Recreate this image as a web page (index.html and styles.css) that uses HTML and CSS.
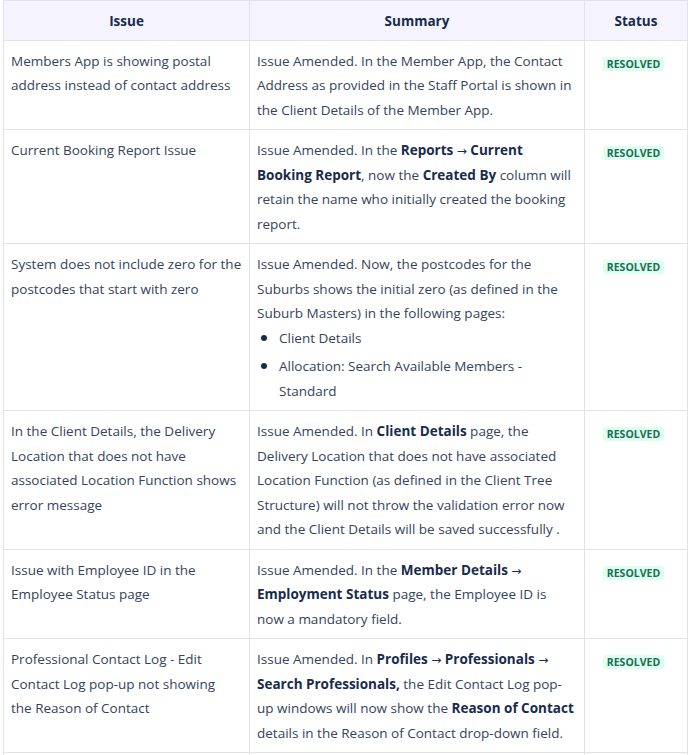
FILE: index.html
```html
<!DOCTYPE html>
<html lang="en">
<head>
<meta charset="utf-8">
<title>Issues</title>
<link rel="stylesheet" href="styles.css">
</head>
<body>
<div class="wrap">
<table class="issues">
<colgroup><col class="c1"><col class="c2"><col class="c3"></colgroup>
<thead>
<tr><th>Issue</th><th>Summary</th><th>Status</th></tr>
</thead>
<tbody>
<tr>
<td>Members App is showing postal address instead of contact address</td>
<td>Issue Amended. In the Member App, the Contact Address as provided in the Staff Portal is shown in the Client Details of the Member App.</td>
<td class="st"><span class="lozenge">Resolved</span></td>
</tr>
<tr>
<td>Current Booking Report Issue</td>
<td>Issue Amended. In the <b>Reports <span class="arr">→</span> Current Booking Report</b>, now the <b>Created By</b> column will retain the name who initially created the booking report.</td>
<td class="st"><span class="lozenge">Resolved</span></td>
</tr>
<tr>
<td>System does not include zero for the postcodes that start with zero</td>
<td>Issue Amended. Now, the postcodes for the Suburbs shows the initial zero (as defined in the Suburb Masters) in the following pages:
<ul><li>Client Details</li><li>Allocation: Search Available Members - Standard</li></ul></td>
<td class="st"><span class="lozenge">Resolved</span></td>
</tr>
<tr>
<td>In the Client Details, the Delivery Location that does not have associated Location Function shows error message</td>
<td>Issue Amended. In <b>Client Details</b> page, the Delivery Location that does not have associated Location Function (as defined in the Client Tree Structure) will not throw the validation error now and the Client Details will be saved successfully .</td>
<td class="st"><span class="lozenge">Resolved</span></td>
</tr>
<tr>
<td>Issue with Employee ID in the Employee Status page</td>
<td>Issue Amended. In the <b>Member Details <span class="arr">→</span> Employment Status</b> page, the Employee ID is now a mandatory field.</td>
<td class="st"><span class="lozenge">Resolved</span></td>
</tr>
<tr>
<td>Professional Contact Log - Edit Contact Log pop-up not showing<br>the Reason of Contact</td>
<td>Issue Amended. In <b>Profiles <span class="arr">→</span> Professionals <span class="arr">→</span> Search Professionals,</b> the Edit Contact Log pop-up windows will now show the <b>Reason of Contact</b> details in the Reason of Contact drop-down field.</td>
<td class="st"><span class="lozenge">Resolved</span></td>
</tr>
<tr>
<td>&nbsp;</td>
<td>&nbsp;</td>
<td class="st">&nbsp;</td>
</tr>
</tbody>
</table>
</div>
</body>
</html>
```
FILE: styles.css
```css
html, body {
  margin: 0;
  padding: 0;
  background: #ffffff;
}
body {
  font-family: "Open Sans", "Noto Sans", sans-serif;
  font-size: 13.5px;
  line-height: 24.5px;
  color: #33445d;
}
.wrap {
  padding: 0 0 0 3px;
}
.issues {
  border-collapse: collapse;
  table-layout: fixed;
  width: 684px;
}
.c1 { width: 246px; }
.c2 { width: 335px; }
.c3 { width: 103px; }
.issues th,
.issues td {
  border: 1px solid #e2e3ea;
  padding: 8px 8px 7px 7px;
  vertical-align: top;
  text-align: left;
}
.issues td:first-child {
  padding-right: 4px;
}
.issues th {
  background: #f4f3fe;
  color: #172b4d;
  font-weight: 700;
  text-align: center;
  padding: 8px 8px 6px 8px;
}
.issues b {
  color: #172b4d;
  font-weight: 700;
}
.arr {
  font-family: "DejaVu Sans", sans-serif;
  font-size: 12px;
  font-weight: 400;
  line-height: 1;
}
.issues td.st {
  text-align: center;
}
.issues ul {
  margin: -1px 0 0 0;
  padding-left: 22px;
}
.issues li + li {
  margin-top: 3px;
}
.issues li::marker {
  color: #172b4d;
  font-size: 16px;
}
.lozenge {
  display: inline-block;
  background: #dcfff1;
  color: #216e4e;
  font-size: 10.5px;
  font-weight: 700;
  text-transform: uppercase;
  line-height: 14px;
  padding: 0 4px;
  border-radius: 3px;
  vertical-align: -2px;
  margin-right: 4px;
}
```
